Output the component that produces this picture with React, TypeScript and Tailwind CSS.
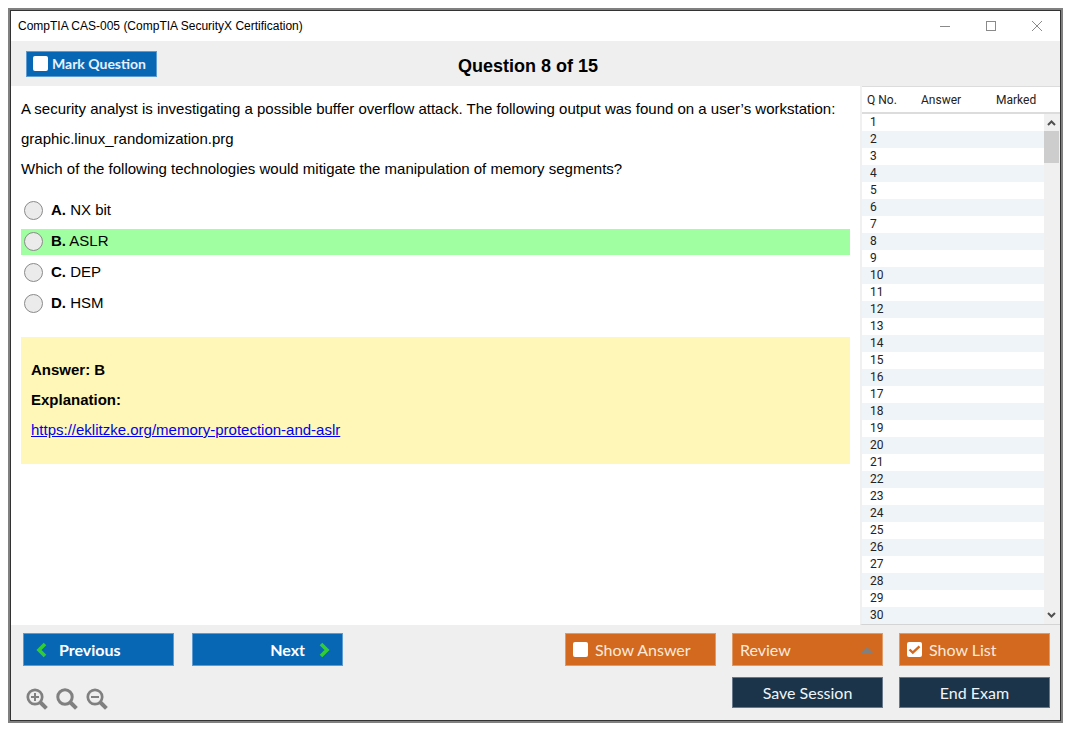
import React, { useState } from 'react';

const QUESTION_ROWS = Array.from({ length: 30 }, (_, i) => i + 1);

const OPTIONS = [
  { letter: 'A', text: 'NX bit' },
  { letter: 'B', text: 'ASLR' },
  { letter: 'C', text: 'DEP' },
  { letter: 'D', text: 'HSM' },
];

const CORRECT = 'B';

const TitleBar: React.FC = () => (
  <div className="flex h-[30px] shrink-0 items-center justify-between bg-white pl-[7px] pr-[17px]">
    <span className="text-[12px] leading-4">CompTIA CAS-005 (CompTIA SecurityX Certification)</span>
    <div className="flex items-center gap-[34px] pb-px text-[#8a8a8a]">
      <button type="button" aria-label="Minimize">
        <svg width="12" height="12" viewBox="0 0 12 12" className="block" fill="none" stroke="currentColor">
          <path d="M1 6.5h10" />
        </svg>
      </button>
      <button type="button" aria-label="Maximize">
        <svg width="12" height="12" viewBox="0 0 12 12" className="block" fill="none" stroke="currentColor">
          <rect x="1.5" y="1.5" width="9" height="9" />
        </svg>
      </button>
      <button type="button" aria-label="Close">
        <svg width="12" height="12" viewBox="0 0 12 12" className="block" fill="none" stroke="currentColor">
          <path d="M1 1l10 10M11 1L1 11" />
        </svg>
      </button>
    </div>
  </div>
);

interface TickBoxProps {
  label: string;
  checked: boolean;
  onChange: (checked: boolean) => void;
  className: string;
}

const TickBox: React.FC<TickBoxProps> = ({ label, checked, onChange, className }) => (
  <label className={`flex cursor-pointer items-center border ${className}`}>
    <span className="grid shrink-0">
      <input
        type="checkbox"
        checked={checked}
        onChange={(e) => onChange(e.target.checked)}
        className="col-start-1 row-start-1 size-[15px] appearance-none rounded-[2px] bg-white"
      />
      {checked && (
        <svg
          viewBox="0 0 15 15"
          className="pointer-events-none col-start-1 row-start-1 size-[15px] text-[#d2691e]"
          fill="none"
          stroke="currentColor"
          strokeWidth="2.4"
        >
          <path d="M2.5 7.5l3.3 3.2 6.7-6.4" />
        </svg>
      )}
    </span>
    {label}
  </label>
);

const Magnifier: React.FC<{ label: string; sign?: string }> = ({ label, sign }) => (
  <button type="button" aria-label={label}>
    <svg width="22" height="22" viewBox="0 0 22 22" className="block" fill="none" stroke="#808080">
      <circle cx="9" cy="9" r="7.2" strokeWidth={sign ? 2.7 : 3} />
      <path d="M14 14l6.400 6.400" strokeWidth="4" />
      {sign && <path d={sign} strokeWidth="2" />}
    </svg>
  </button>
);

const QuestionList: React.FC = () => (
  <aside className="flex w-[200px] shrink-0 overflow-hidden border-b border-l-2 border-b-[#d4d4d4] border-l-[#f0f0f0] bg-white">
    <table className="flex-1 table-fixed border-separate border-spacing-0 self-start text-[12px] text-[#222] font-[Roboto,sans-serif]">
      <thead>
        <tr className="h-7 text-left leading-4">
          <th className="w-[54px] border-t border-b-2 border-[#dcdcdc] pl-[5px] font-normal">Q No.</th>
          <th className="w-[75px] border-t border-b-2 border-[#dcdcdc] pl-[5px] font-normal">Answer</th>
          <th className="border-t border-b-2 border-[#dcdcdc] pl-[5px] font-normal">Marked</th>
        </tr>
      </thead>
      <tbody>
        {QUESTION_ROWS.map((n) => (
          <tr key={n} className="h-[17px] leading-[17px] even:bg-[#eff4f9]">
            <td className="pl-2">{n}</td>
            <td />
            <td />
          </tr>
        ))}
      </tbody>
    </table>
    <div className="flex w-4 flex-col">
      <div className="h-7 shrink-0 border-t border-b-2 border-[#dcdcdc]" />
      <div className="flex flex-1 flex-col bg-[#f0f0f0]">
        <svg viewBox="0 0 16 17" className="h-[17px] w-4" fill="none" stroke="#505050" strokeWidth="2">
          <path d="M4 11l3.500-3.500L11 11" />
        </svg>
        <div className="mr-px h-8 bg-[#cdcdcd]" />
        <svg viewBox="0 0 16 17" className="mt-auto h-[17px] w-4" fill="none" stroke="#505050" strokeWidth="2">
          <path d="M4 6l3.500 3.500L11 6" />
        </svg>
      </div>
    </div>
  </aside>
);

export default function App() {
  const [marked, setMarked] = useState(false);
  const [showAnswer, setShowAnswer] = useState(false);
  const [showList, setShowList] = useState(true);

  return (
    <div className="flex h-screen bg-white pt-2 pr-3 pb-3 pl-2 font-['Liberation_Sans',Arial,sans-serif] text-black">
      <div className="flex min-w-0 flex-1 border-2 border-[#808080]">
        <div className="flex min-w-0 flex-1 flex-col border border-[#333]">
          <TitleBar />

          {/* Question header */}
          <header className="grid h-[45px] shrink-0 grid-cols-[1fr_auto_1fr] items-center bg-[#efefef] pr-[30px] pl-[15px]">
            <TickBox
              label="Mark Question"
              checked={marked}
              onChange={setMarked}
              className="h-[26px] w-[131px] gap-1 border-[#5d9bd0] bg-[#0867b5] pl-[6px] font-[Lato,sans-serif] text-[14px] font-bold text-[#e6f1fb]"
            />
            <h1 className="pt-1 text-[18px] leading-6 font-bold">Question 8 of 15</h1>
          </header>

          <div className="flex min-h-0 flex-1">
            <main className="min-w-0 flex-1 overflow-hidden px-[10px] pt-[14px] text-[15px] leading-[18px]">
              <div className="flex flex-col gap-3">
                <p>
                  A security analyst is investigating a possible buffer overflow attack. The following output was found
                  on a user’s workstation:
                </p>
                <p>graphic.linux_randomization.prg</p>
                <p>Which of the following technologies would mitigate the manipulation of memory segments?</p>
              </div>

              <div className="mt-5 flex flex-col gap-[5px]">
                {OPTIONS.map(({ letter, text }) => (
                  <label
                    key={letter}
                    className={`flex h-[26px] items-start gap-2 pt-[3px] pl-[3px] ${letter === CORRECT ? 'bg-[#a0ffa0]' : ''}`}
                  >
                    <input
                      type="radio"
                      name="answer"
                      value={letter}
                      className="size-[19px] appearance-none rounded-full border border-[#8a8a8a] bg-[#ebebeb] checked:border-[6px]"
                    />
                    <span>
                      <b>{letter}.</b> {text}
                    </span>
                  </label>
                ))}
              </div>

              {/* Answer and explanation */}
              <section className="mt-5 flex flex-col gap-3 bg-[#fff7b8] px-[10px] pt-6 pb-[25px]">
                <p className="font-bold">Answer: B</p>
                <p className="font-bold">Explanation:</p>
                <p>
                  <a href="https://eklitzke.org/memory-protection-and-aslr" className="text-[#0000ee] underline">
                    https://eklitzke.org/memory-protection-and-aslr
                  </a>
                </p>
              </section>
            </main>

            {showList && <QuestionList />}
          </div>

          {/* Bottom controls */}
          <footer className="flex h-[95px] shrink-0 justify-between bg-[#efefef] pt-2 pr-[10px] pl-3 font-[Lato,sans-serif] text-[16px]">
            <div>
              <div className="flex gap-[18px] font-bold text-white">
                <button
                  type="button"
                  className="flex h-[33px] w-[151px] items-center gap-3 border border-[#5d9bd0] bg-[#0867b5] pl-3"
                >
                  <svg width="11" height="16" viewBox="0 0 11 16" fill="none" stroke="#32cd32" strokeWidth="3.6">
                    <path d="M9 2L3 8l6 6" />
                  </svg>
                  Previous
                </button>
                <button
                  type="button"
                  className="flex h-[33px] w-[151px] items-center justify-end gap-[14px] border border-[#5d9bd0] bg-[#0867b5] pr-3"
                >
                  Next
                  <svg width="11" height="16" viewBox="0 0 11 16" fill="none" stroke="#32cd32" strokeWidth="3.6">
                    <path d="M2 2l6 6-6 6" />
                  </svg>
                </button>
              </div>
              <div className="mt-[22px] flex gap-2 pl-[3px]">
                <Magnifier label="Zoom in" sign="M5 9h8M9 5v8" />
                <Magnifier label="Reset zoom" />
                <Magnifier label="Zoom out" sign="M5 9h8" />
              </div>
            </div>

            <div className="flex flex-col items-end gap-[11px] text-[#fbe9dc]">
              <div className="flex gap-4">
                <TickBox
                  label="Show Answer"
                  checked={showAnswer}
                  onChange={setShowAnswer}
                  className="h-[33px] w-[151px] gap-[7px] border-[#e09a68] bg-[#d2691e] pl-[7px]"
                />
                <div className="flex h-[33px] w-[151px] items-center border border-[#e09a68] bg-[#d2691e] pr-[9px] pl-[7px]">
                  <select aria-label="Review" className="min-w-0 flex-1 appearance-none bg-transparent">
                    <option>Review</option>
                  </select>
                  <svg width="12" height="6" viewBox="0 0 12 6" fill="#808080">
                    <path d="M0 6l6-6 6 6z" />
                  </svg>
                </div>
                <TickBox
                  label="Show List"
                  checked={showList}
                  onChange={setShowList}
                  className="h-[33px] w-[151px] gap-[7px] border-[#e09a68] bg-[#d2691e] pl-[7px]"
                />
              </div>
              <div className="flex gap-4 text-[#f0f4f8]">
                <button type="button" className="h-[31px] w-[151px] border border-[#66788a] bg-[#1b344a]">
                  Save Session
                </button>
                <button type="button" className="h-[31px] w-[151px] border border-[#66788a] bg-[#1b344a]">
                  End Exam
                </button>
              </div>
            </div>
          </footer>
        </div>
      </div>
    </div>
  );
}
